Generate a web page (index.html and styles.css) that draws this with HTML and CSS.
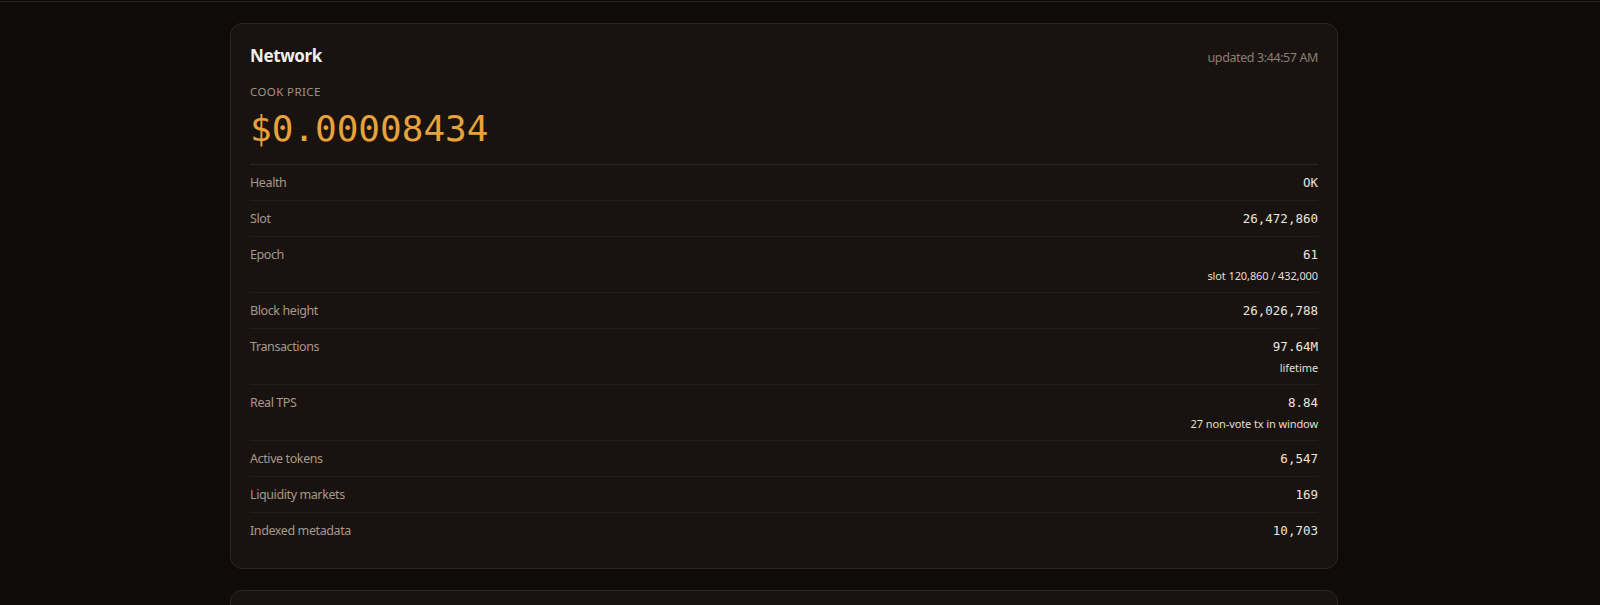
FILE: index.html
```html
<!DOCTYPE html>
<html>
<head>
<meta charset="utf-8">
<link rel="stylesheet" href="styles.css">
</head>
<body>
<div class="topline"></div>
<main class="main">
  <section class="card">
    <header class="card-head">
      <h2 class="title">Network</h2>
      <span class="updated">updated 3:44:57 AM</span>
    </header>
    <div class="price-label">COOK PRICE</div>
    <div class="price">$0.00008434</div>
    <div class="rows">
      <div class="row"><span class="label">Health</span><div class="val"><div class="num">OK</div></div></div>
      <div class="row"><span class="label">Slot</span><div class="val"><div class="num">26,472,860</div></div></div>
      <div class="row"><span class="label">Epoch</span><div class="val"><div class="num">61</div><div class="sub">slot 120,860 / 432,000</div></div></div>
      <div class="row"><span class="label">Block height</span><div class="val"><div class="num">26,026,788</div></div></div>
      <div class="row"><span class="label">Transactions</span><div class="val"><div class="num">97.64M</div><div class="sub">lifetime</div></div></div>
      <div class="row"><span class="label">Real TPS</span><div class="val"><div class="num">8.84</div><div class="sub">27 non-vote tx in window</div></div></div>
      <div class="row"><span class="label">Active tokens</span><div class="val"><div class="num">6,547</div></div></div>
      <div class="row"><span class="label">Liquidity markets</span><div class="val"><div class="num">169</div></div></div>
      <div class="row"><span class="label">Indexed metadata</span><div class="val"><div class="num">10,703</div></div></div>
    </div>
  </section>
  <section class="card next"></section>
</main>
</body>
</html>
```

FILE: styles.css
```css
html, body {
  margin: 0;
  padding: 0;
  background: #0e0b09;
  font-family: "Noto Sans", "Open Sans", sans-serif;
  color: #ece6dc;
  overflow: hidden;
}
.topline {
  height: 1px;
  border-bottom: 1px solid #2a2420;
}
.main {
  width: 1108px;
  margin-left: 230px;
  padding-top: 21px;
  display: flex;
  flex-direction: column;
  gap: 21px;
}
.card {
  background: #181311;
  border: 1px solid #2b241f;
  border-radius: 12px;
  padding: 19px 19px 20px 19px;
}
.card.next {
  height: 200px;
}
.card-head {
  display: flex;
  justify-content: space-between;
  align-items: center;
  height: 24px;
}
.title {
  margin: 0;
  font-size: 17px;
  font-weight: 700;
  color: #f4efe8;
  letter-spacing: -0.4px;
}
.updated {
  font-size: 12.5px;
  color: #8a7f75;
  padding-top: 4px;
  letter-spacing: -0.4px;
}
.price-label {
  margin-top: 17px;
  font-size: 11.5px;
  line-height: 16px;
  letter-spacing: 0.4px;
  color: #a09384;
}
.price {
  font-family: "DejaVu Sans Mono", monospace;
  font-size: 36px;
  line-height: 40px;
  margin-top: 9px;
  color: #e8a23a;
}
.rows {
  margin-top: 15px;
  border-top: 1px solid #2e2621;
}
.row {
  display: flex;
  justify-content: space-between;
  align-items: flex-start;
  padding: 8px 0;
  border-bottom: 1px solid #231d19;
}
.row:last-child {
  border-bottom: none;
}
.label {
  font-size: 12.5px;
  line-height: 19px;
  color: #a89888;
  letter-spacing: -0.4px;
}
.val {
  text-align: right;
}
.num {
  font-family: "DejaVu Sans Mono", monospace;
  font-size: 12.5px;
  line-height: 19px;
  color: #ece6dc;
}
.sub {
  margin-top: 4px;
  font-size: 11px;
  line-height: 16px;
  color: #e6ded2;
  letter-spacing: -0.1px;
}
```
